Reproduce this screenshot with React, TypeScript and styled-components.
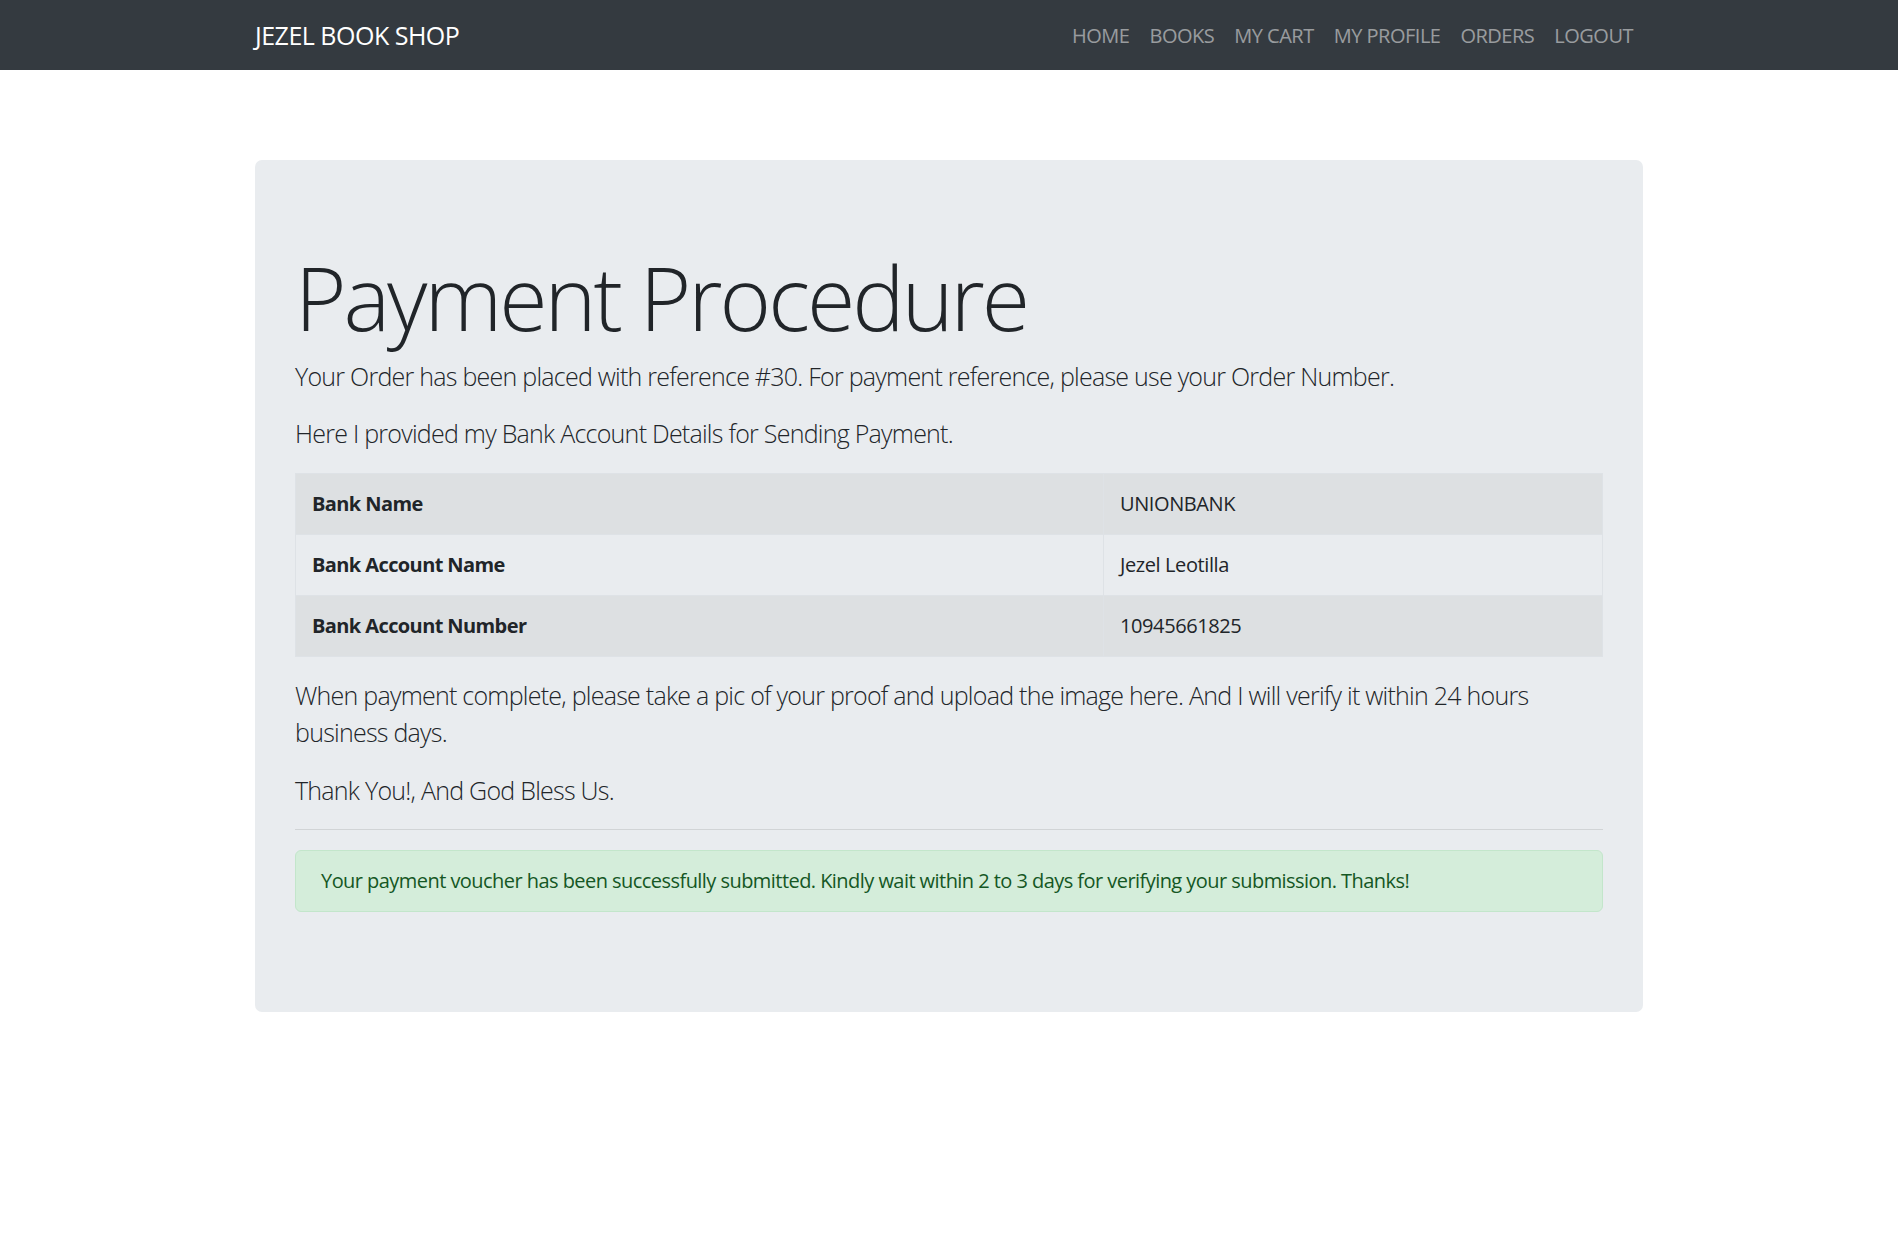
import React from "react";
import styled, { createGlobalStyle } from "styled-components";

const GlobalStyle = createGlobalStyle`
  body {
    margin: 0;
    background: #fff;
    color: #212529;
    font-family: "Open Sans", "Noto Sans", "Liberation Sans", sans-serif;
  }
  * {
    box-sizing: border-box;
  }
`;

const Navbar = styled.nav`
  height: 70px;
  background: #343a40;
`;

const Container = styled.div`
  width: 1388px;
  margin: 0 auto;
`;

const NavInner = styled(Container)`
  height: 100%;
  display: flex;
  align-items: center;
  justify-content: space-between;
`;

const Brand = styled.a`
  font-size: 25px;
  color: #fff;
  text-decoration: none;
  letter-spacing: -0.5px;
`;

const NavList = styled.ul`
  display: flex;
  list-style: none;
  margin: 0;
  padding: 0;
`;

const NavLink = styled.a`
  display: block;
  padding: 0 10px;
  font-size: 20px;
  color: rgba(255, 255, 255, 0.5);
  text-decoration: none;
  letter-spacing: -0.5px;
`;

const Main = styled(Container)`
  margin-top: 90px;
`;

const Jumbotron = styled.section`
  background: #e9ecef;
  border-radius: 7px;
  padding: 80px 40px;
`;

const Title = styled.h1`
  margin: 0 0 12px;
  padding-top: 9px;
  font-size: 88px;
  font-weight: 300;
  line-height: 1.1;
  letter-spacing: -3px;
`;

const Lead = styled.p`
  margin: 0 0 20px;
  font-size: 25px;
  font-weight: 300;
  line-height: 37.5px;
  letter-spacing: -0.75px;
`;

const Table = styled.table`
  width: 100%;
  border-collapse: collapse;
  margin-bottom: 20px;
  font-size: 20px;
`;

const Row = styled.tr<{ $striped?: boolean }>`
  background: ${(p) => (p.$striped ? "rgba(0, 0, 0, 0.05)" : "transparent")};
`;

const Cell = styled.td<{ $head?: boolean }>`
  border: 1px solid #dee2e6;
  padding: 15px 16px;
  line-height: 30px;
  font-weight: ${(p) => (p.$head ? 700 : 400)};
  letter-spacing: ${(p) => (p.$head ? "-0.6px" : "-0.4px")};
  width: ${(p) => (p.$head ? "808px" : "auto")};
`;

const Divider = styled.hr`
  margin: 18px 0 20px;
  border: 0;
  border-top: 1px solid rgba(0, 0, 0, 0.1);
`;

const Alert = styled.div`
  margin-bottom: 20px;
  padding: 15px 25px;
  border: 1px solid #c3e6cb;
  border-radius: 6px;
  background: #d4edda;
  color: #155724;
  font-size: 20px;
  line-height: 30px;
  letter-spacing: -0.55px;
`;

const links = ["HOME", "BOOKS", "MY CART", "MY PROFILE", "ORDERS", "LOGOUT"];

const bank = [
  { label: "Bank Name", value: "UNIONBANK" },
  { label: "Bank Account Name", value: "Jezel Leotilla" },
  { label: "Bank Account Number", value: "10945661825" },
];

const App = () => {
  return (
    <>
      <GlobalStyle />
      <Navbar>
        <NavInner>
          <Brand href="#">JEZEL BOOK SHOP</Brand>
          <NavList>
            {links.map((l) => (
              <li key={l}>
                <NavLink href="#">{l}</NavLink>
              </li>
            ))}
          </NavList>
        </NavInner>
      </Navbar>
      <Main>
        <Jumbotron>
          <Title>Payment Procedure</Title>
          <Lead>
            Your Order has been placed with reference #30. For payment
            reference, please use your Order Number.
          </Lead>
          <Lead>Here I provided my Bank Account Details for Sending Payment.</Lead>
          <Table>
            <tbody>
              {bank.map((b, i) => (
                <Row key={b.label} $striped={i % 2 === 0}>
                  <Cell $head>{b.label}</Cell>
                  <Cell>{b.value}</Cell>
                </Row>
              ))}
            </tbody>
          </Table>
          <Lead>
            When payment complete, please take a pic of your proof and upload
            the image here. And I will verify it within 24 hours business days.
          </Lead>
          <Lead>Thank You!, And God Bless Us.</Lead>
          <Divider />
          <Alert>
            Your payment voucher has been successfully submitted. Kindly wait
            within 2 to 3 days for verifying your submission. Thanks!
          </Alert>
        </Jumbotron>
      </Main>
    </>
  );
};

export default App;
